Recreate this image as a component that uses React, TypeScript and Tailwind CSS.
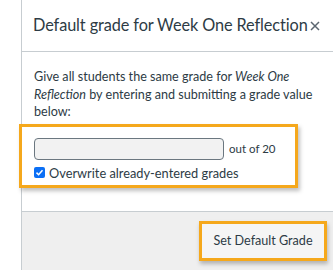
import React from 'react';

// Default grade dialog with highlight annotations

const ORANGE = 'border-[#f5a81c]';

export default function App(): React.ReactElement {
  return (
    <div className="flex h-[270px] w-[333px] overflow-hidden bg-white font-['Lato','Noto_Sans',sans-serif] text-[#2d3b45]">
      <div className="w-[21px] shrink-0 bg-white" />
      <div className="flex flex-1 flex-col border-l border-[#c7cdd1]">
        {/* Header */}
        <div className="flex h-[52px] items-center border-b border-[#c7cdd1] pl-[11px]">
          <h1 className="text-[16.3px] leading-none tracking-[-0.1px] whitespace-nowrap">
            Default grade for Week One Reflection
          </h1>
          <svg viewBox="0 0 10 10" className="ml-[2px] mt-[1px] h-[10px] w-[10px]" aria-hidden="true">
            <path d="M1 1 L9 9 M9 1 L1 9" stroke="#5b6670" strokeWidth="1.5" fill="none" />
          </svg>
        </div>

        {/* Body */}
        <div className="flex-1 pt-[16px]">
          <p className="pl-[12px] text-[12.6px] leading-[17.5px] whitespace-nowrap">
            Give all students the same grade for <em>Week One</em>
            <br />
            <em>Reflection</em> by entering and submitting a grade value
            <br />
            below:
          </p>
          <div
            className={`-ml-[3px] mt-[3px] h-[64px] w-[279px] border-[3px] ${ORANGE} bg-white pl-[12px] pt-[11px] shadow-[2px_3px_4px_rgba(0,0,0,0.25)]`}
          >
            <div className="flex items-center gap-[5px]">
              <div className="h-[22px] w-[190px] rounded-[4px] border border-[#6b7780] bg-[#f2f2f2]" />
              <span className="text-[11.5px] leading-none">out of 20</span>
            </div>
            <label className="mt-[7px] flex items-center gap-[4px]">
              <span className="flex h-[11px] w-[11px] items-center justify-center rounded-[2px] bg-[#0b6ff5]">
                <svg viewBox="0 0 12 12" className="h-[9px] w-[9px]">
                  <path d="M2 6.2 L4.8 9 L10 3" fill="none" stroke="white" strokeWidth="2" />
                </svg>
              </span>
              <span className="text-[12.8px] leading-none">Overwrite already-entered grades</span>
            </label>
          </div>
        </div>

        {/* Footer */}
        <div className="flex h-[59px] items-start justify-end border-t border-[#c7cdd1] bg-[#efefef] pr-[6px] pt-[9px]">
          <button className="flex h-[40px] w-[128px] items-center justify-center border-[3px] border-[#f5a81c] bg-[#f5f5f5] text-[12.6px] text-[#2d3b45] shadow-[1px_3px_4px_rgba(0,0,0,0.25)]">
            Set Default Grade
          </button>
        </div>
      </div>
    </div>
  );
}
